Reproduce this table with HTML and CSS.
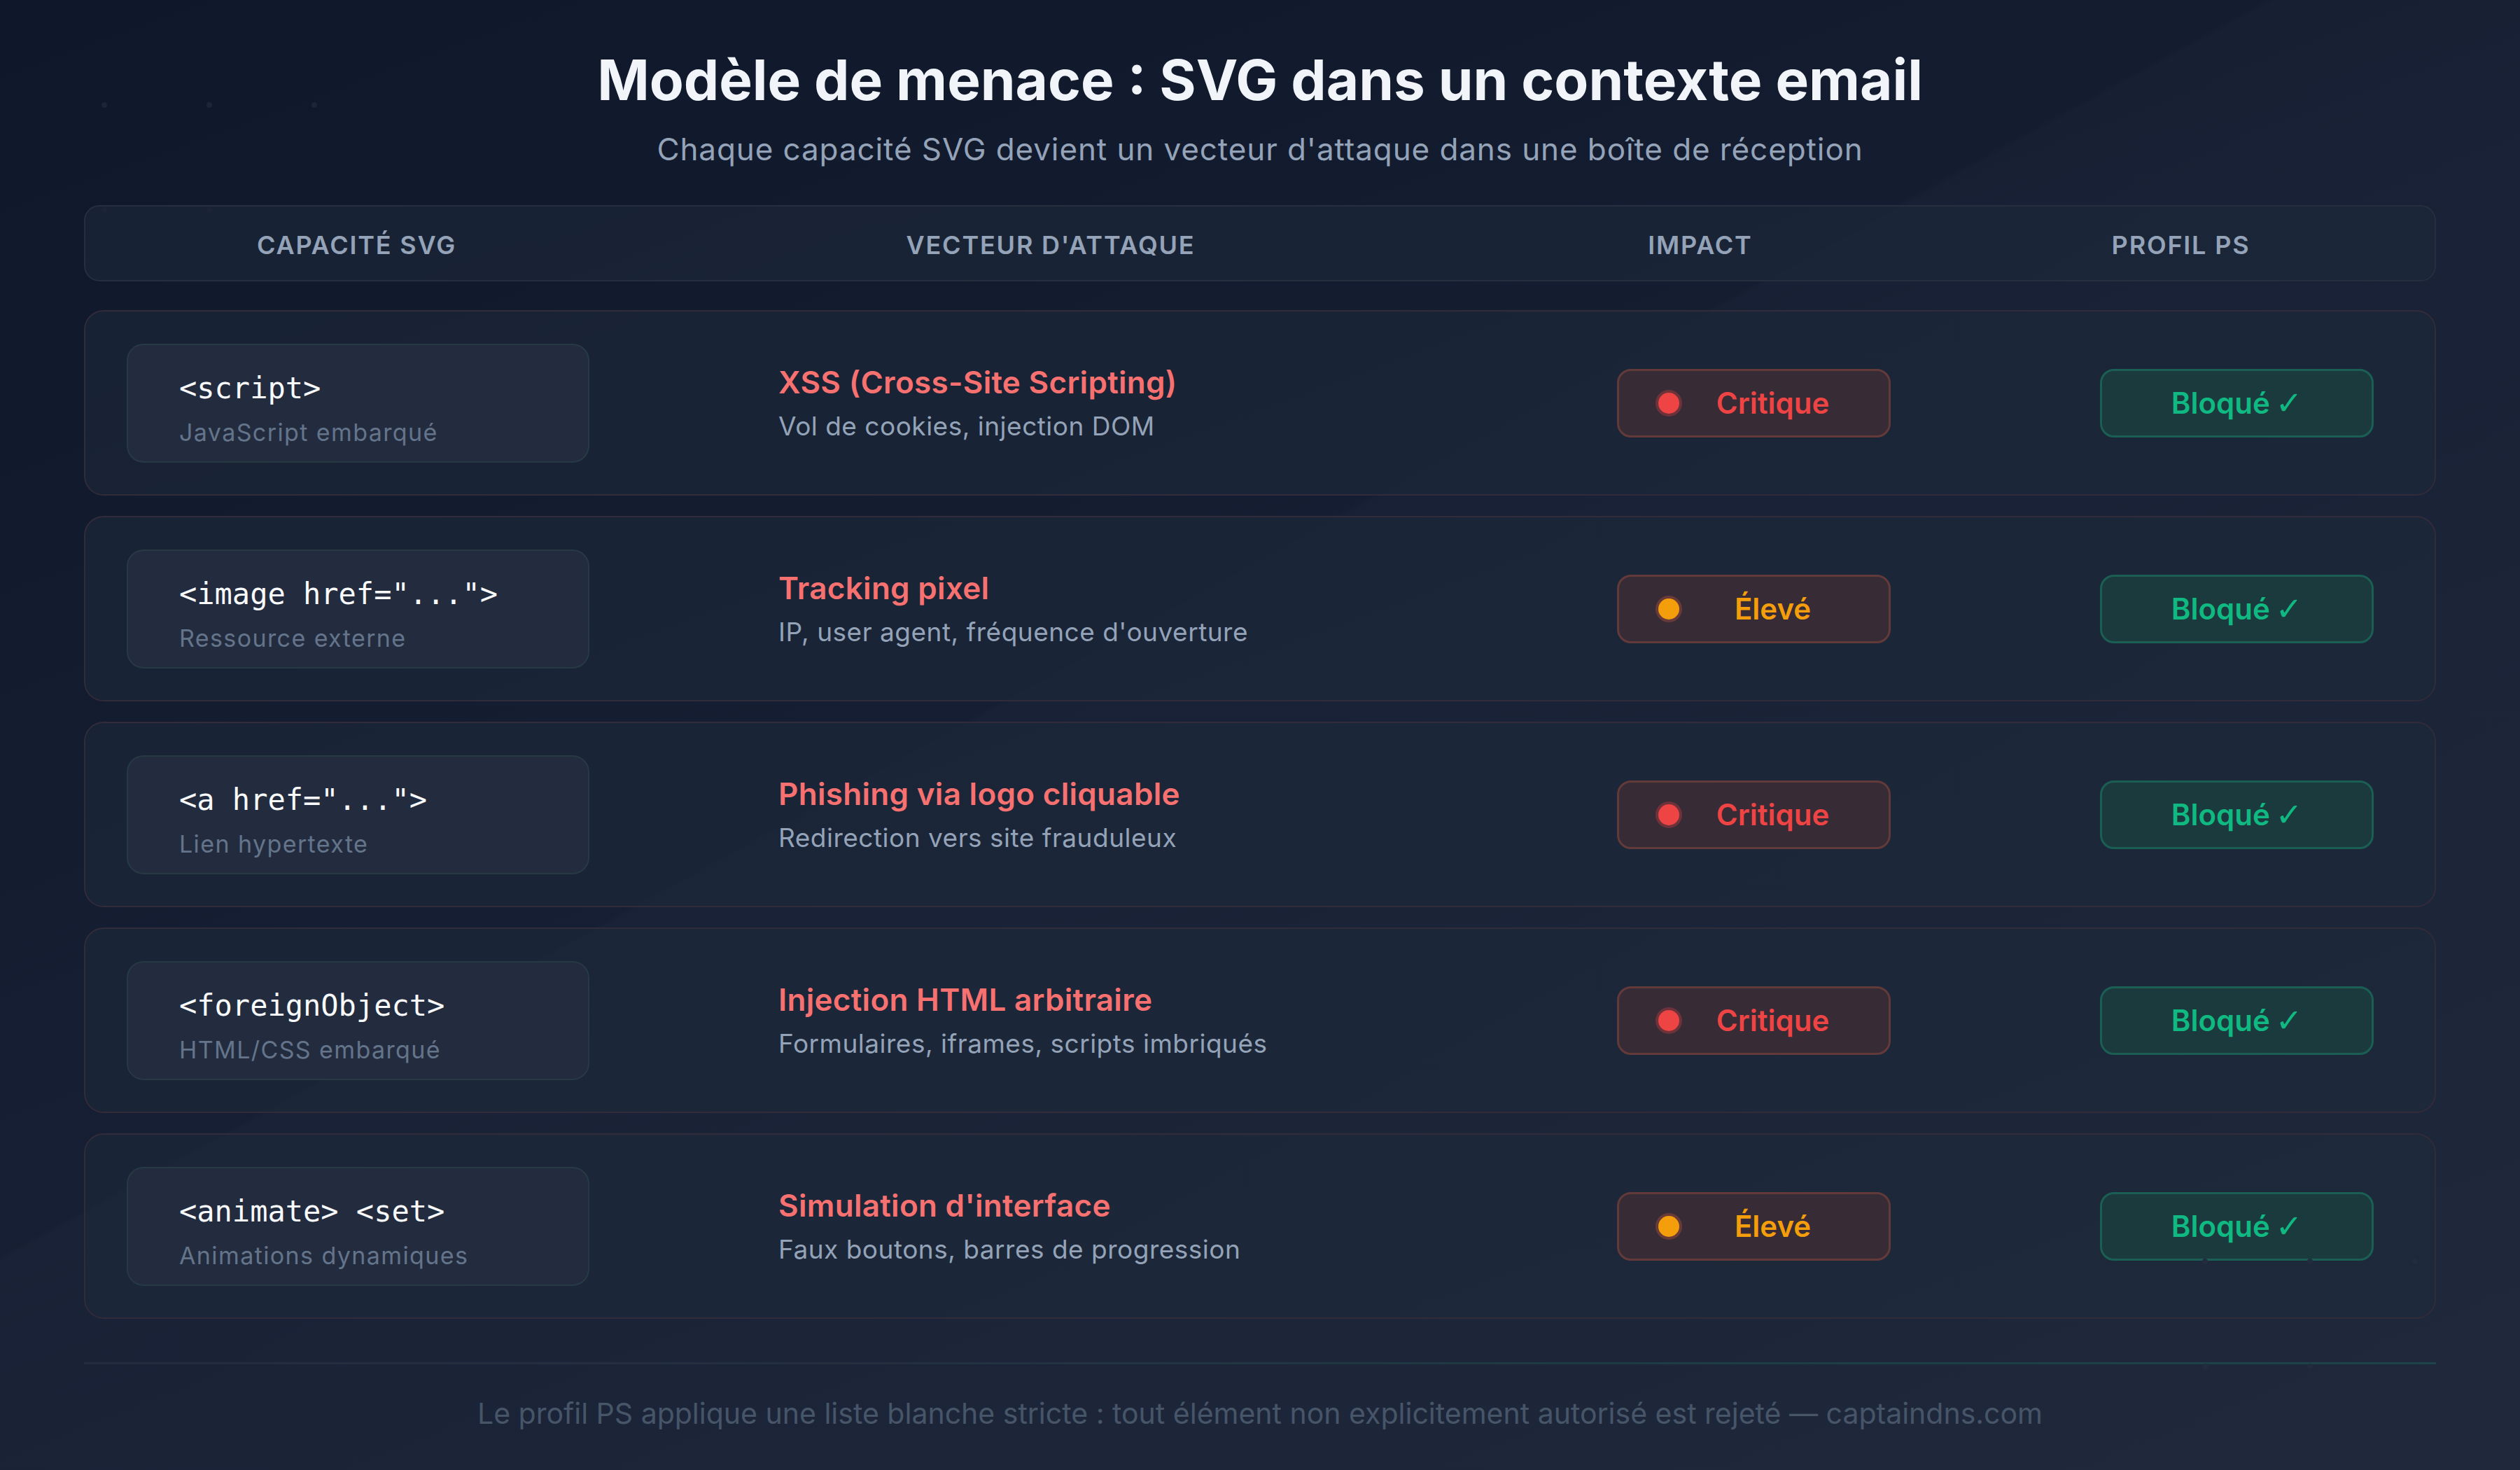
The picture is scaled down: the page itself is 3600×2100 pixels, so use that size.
FILE: index.html
```html
<!DOCTYPE html>
<html lang="fr">
<head>
<meta charset="utf-8">
<title>Modèle de menace : SVG dans un contexte email</title>
<link rel="stylesheet" href="styles.css">
</head>
<body>
<div class="page">
  <div class="dots dots-tl" aria-hidden="true">
    <i></i><i></i><i></i><i></i><i></i>
  </div>
  <div class="dots dots-br" aria-hidden="true">
    <i></i><i></i><i></i><i></i><i></i>
  </div>

  <header class="head">
    <h1 class="title">Modèle de menace : SVG dans un contexte email</h1>
    <p class="subtitle">Chaque capacité SVG devient un vecteur d'attaque dans une boîte de réception</p>
  </header>

  <main class="table">
    <div class="thead">
      <div class="th">CAPACITÉ SVG</div>
      <div class="th">VECTEUR D'ATTAQUE</div>
      <div class="th">IMPACT</div>
      <div class="th">PROFIL PS</div>
    </div>

    <div class="row">
      <div class="cell-cap">
        <div class="code-box">
          <code class="code">&lt;script&gt;</code>
          <span class="code-desc">JavaScript embarqué</span>
        </div>
      </div>
      <div class="cell-vec">
        <div class="vec-title">XSS (Cross-Site Scripting)</div>
        <div class="vec-desc">Vol de cookies, injection DOM</div>
      </div>
      <div class="cell-impact">
        <span class="pill impact crit"><i class="dot"></i><span class="pill-label">Critique</span></span>
      </div>
      <div class="cell-status">
        <span class="pill ok">Bloqué <span class="check">✓</span></span>
      </div>
    </div>

    <div class="row">
      <div class="cell-cap">
        <div class="code-box">
          <code class="code">&lt;image href="..."&gt;</code>
          <span class="code-desc">Ressource externe</span>
        </div>
      </div>
      <div class="cell-vec">
        <div class="vec-title">Tracking pixel</div>
        <div class="vec-desc">IP, user agent, fréquence d'ouverture</div>
      </div>
      <div class="cell-impact">
        <span class="pill impact high"><i class="dot"></i><span class="pill-label">Élevé</span></span>
      </div>
      <div class="cell-status">
        <span class="pill ok">Bloqué <span class="check">✓</span></span>
      </div>
    </div>

    <div class="row">
      <div class="cell-cap">
        <div class="code-box">
          <code class="code">&lt;a href="..."&gt;</code>
          <span class="code-desc">Lien hypertexte</span>
        </div>
      </div>
      <div class="cell-vec">
        <div class="vec-title">Phishing via logo cliquable</div>
        <div class="vec-desc">Redirection vers site frauduleux</div>
      </div>
      <div class="cell-impact">
        <span class="pill impact crit"><i class="dot"></i><span class="pill-label">Critique</span></span>
      </div>
      <div class="cell-status">
        <span class="pill ok">Bloqué <span class="check">✓</span></span>
      </div>
    </div>

    <div class="row">
      <div class="cell-cap">
        <div class="code-box">
          <code class="code">&lt;foreignObject&gt;</code>
          <span class="code-desc">HTML/CSS embarqué</span>
        </div>
      </div>
      <div class="cell-vec">
        <div class="vec-title">Injection HTML arbitraire</div>
        <div class="vec-desc">Formulaires, iframes, scripts imbriqués</div>
      </div>
      <div class="cell-impact">
        <span class="pill impact crit"><i class="dot"></i><span class="pill-label">Critique</span></span>
      </div>
      <div class="cell-status">
        <span class="pill ok">Bloqué <span class="check">✓</span></span>
      </div>
    </div>

    <div class="row">
      <div class="cell-cap">
        <div class="code-box">
          <code class="code">&lt;animate&gt; &lt;set&gt;</code>
          <span class="code-desc">Animations dynamiques</span>
        </div>
      </div>
      <div class="cell-vec">
        <div class="vec-title">Simulation d'interface</div>
        <div class="vec-desc">Faux boutons, barres de progression</div>
      </div>
      <div class="cell-impact">
        <span class="pill impact high"><i class="dot"></i><span class="pill-label">Élevé</span></span>
      </div>
      <div class="cell-status">
        <span class="pill ok">Bloqué <span class="check">✓</span></span>
      </div>
    </div>
  </main>

  <footer class="foot">
    <div class="foot-line"></div>
    <p class="foot-text">Le profil PS applique une liste blanche stricte : tout élément non explicitement autorisé est rejeté — captaindns.com</p>
  </footer>
</div>
</body>
</html>
```

FILE: styles.css
```css
* {
  box-sizing: border-box;
}

html, body {
  margin: 0;
  padding: 0;
}

body {
  width: 3600px;
  height: 2100px;
  overflow: hidden;
  font-family: Inter, "Noto Sans", "Liberation Sans", sans-serif;
  background: #111a2d;
}

.page {
  position: relative;
  width: 3600px;
  height: 2100px;
  padding-top: 66px;
  background:
    linear-gradient(151deg, rgba(148,163,184,0) 0%, rgba(148,163,184,0) 43.8%, rgba(148,163,184,0.022) 44%, rgba(148,163,184,0.04) 100%),
    linear-gradient(160deg, #0f172a 0%, #151e32 45%, #1b2437 100%);
}

/* decorative dot grids */
.dots {
  position: absolute;
  display: grid;
  grid-template-columns: repeat(3, 8px);
  column-gap: 142px;
  row-gap: 142px;
}
.dots i {
  display: block;
  width: 8px;
  height: 8px;
  border-radius: 50%;
  background: #1c2538;
}
.dots-tl {
  left: 145px;
  top: 146px;
}
.dots-br {
  left: 3146px;
  top: 1798px;
}
.dots-br i {
  background: #222c3f;
}

/* heading */
.head {
  text-align: center;
}
.title {
  margin: 0;
  font-size: 80px;
  line-height: 96px;
  font-weight: 700;
  letter-spacing: 0;
  color: #f1f5f9;
}
.subtitle {
  margin: 25px 0 0;
  font-size: 44px;
  line-height: 52px;
  font-weight: 400;
  letter-spacing: 0.9px;
  color: #94a3b8;
}

/* table */
.table {
  width: 3360px;
  margin: 54px auto 0;
  display: flex;
  flex-direction: column;
  gap: 29px;
}

.thead {
  display: grid;
  grid-template-columns: 775px 1208px 648px 1fr;
  height: 109px;
  padding: 33px 0 0;
  margin-bottom: 12px;
  border: 2px solid #252f40;
  border-radius: 22px;
  background: rgba(30, 41, 59, 0.55);
}
.th {
  text-align: center;
  font-size: 36px;
  line-height: 44px;
  font-weight: 600;
  letter-spacing: 1.8px;
  color: #94a3b8;
}

.row {
  display: grid;
  grid-template-columns: 931px 1198px 690px 391px;
  align-items: center;
  height: 265px;
  padding: 0 89px 0 59px;
  border: 2px solid #322b39;
  border-radius: 28px;
  background: rgba(30, 41, 59, 0.55);
}

.code-box {
  display: flex;
  flex-direction: column;
  gap: 18px;
  width: 661px;
  height: 170px;
  padding: 37px 0 0 73px;
  border: 2px solid #273a44;
  border-radius: 24px;
  background: #232c3e;
}
.code {
  font-family: "DejaVu Sans Mono", "Liberation Mono", monospace;
  font-size: 42px;
  line-height: 50px;
  color: #f8fafc;
}
.code-desc {
  font-size: 34px;
  line-height: 40px;
  letter-spacing: 1.4px;
  color: #64748b;
}

.cell-vec {
  display: flex;
  flex-direction: column;
  gap: 15px;
}
.vec-title {
  font-size: 44px;
  line-height: 52px;
  font-weight: 600;
  letter-spacing: 0.3px;
  color: #f87171;
}
.vec-desc {
  font-size: 37px;
  line-height: 44px;
  letter-spacing: 0.5px;
  color: #94a3b8;
}

.pill {
  display: flex;
  align-items: center;
  width: 391px;
  height: 98px;
  border-radius: 20px;
  font-size: 42px;
  font-weight: 600;
}
.impact {
  padding: 0 56px;
  gap: 24px;
  border: 3px solid #633a3a;
  background: #372b36;
}
.pill-label {
  flex: 1;
  text-align: center;
}
.dot {
  display: block;
  width: 30px;
  height: 30px;
  border-radius: 50%;
  flex: none;
}
.crit .dot {
  background: #ef4444;
  box-shadow: 0 0 0 4px rgba(239, 68, 68, 0.3);
}
.crit .pill-label {
  color: #ef4444;
}
.high .dot {
  background: #f59e0b;
  box-shadow: 0 0 0 4px rgba(200, 90, 60, 0.35);
}
.high .pill-label {
  color: #f59e0b;
}

.ok {
  justify-content: center;
  gap: 8px;
  border: 3px solid #1b5f54;
  background: #1b3a3e;
  color: #10b981;
}
.check {
  font-family: "DejaVu Sans", sans-serif;
  font-weight: 400;
  font-size: 46px;
  line-height: 1;
}

/* footer */
.foot {
  width: 3360px;
  margin: 62px auto 0;
}
.foot-line {
  height: 3px;
  background: linear-gradient(90deg, #232d3f 0%, #243040 35%, #1d3d45 70%, #1d4448 100%);
}
.foot-text {
  margin: 46px 0 0;
  text-align: center;
  font-size: 41px;
  line-height: 48px;
  color: #475569;
}
```
